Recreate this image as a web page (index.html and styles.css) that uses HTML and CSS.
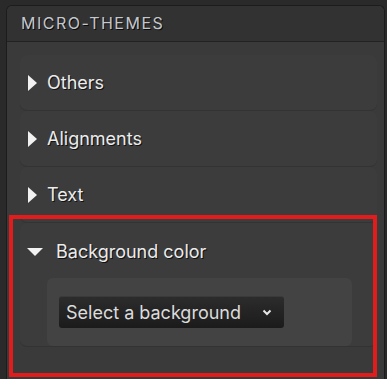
FILE: index.html
```html
<!DOCTYPE html>
<html lang="en">
<head>
  <meta charset="UTF-8">
  <title>Micro-themes</title>
  <link rel="stylesheet" href="styles.css">
</head>
<body>
<div class="painel">
  <div class="painel-titulo">MICRO-THEMES</div>
  <div class="painel-corpo">
    <div class="item">
      <div class="item-rotulo"><span class="seta"></span>Others</div>
    </div>
    <div class="item">
      <div class="item-rotulo"><span class="seta"></span>Alignments</div>
    </div>
    <div class="item">
      <div class="item-rotulo"><span class="seta"></span>Text</div>
    </div>
    <div class="item aberto">
      <div class="item-rotulo"><span class="seta"></span>Background color</div>
      <div class="item-conteudo">
        <div class="seletor">
          <span>Select a background</span>
          <svg width="10" height="7" viewBox="0 0 10 7"><path d="M1.5 1.5 L5 5 L8.5 1.5" fill="none" stroke="#e6e6e6" stroke-width="2"/></svg>
        </div>
      </div>
    </div>
  </div>
  <div class="destaque"></div>
</div>
</body>
</html>
```
FILE: styles.css
```css
body {
  margin: 0;
  background: #2a2a2a;
  font-family: Inter, "Noto Sans", sans-serif;
  color: #ececec;
  height: 379px;
  overflow: hidden;
}
.painel {
  position: relative;
  margin: 5px 2px 0 6px;
  border: 1px solid #1c1c1c;
  border-bottom: none;
  border-radius: 6px 6px 0 0;
  background: #3a3a3a;
  height: 380px;
}
.painel-titulo {
  height: 35px;
  line-height: 35px;
  padding-left: 14px;
  background: #323232;
  border-bottom: 1px solid #222;
  border-radius: 6px 6px 0 0;
  font-size: 16px;
  letter-spacing: 1.5px;
  color: #c4c8cc;
  text-shadow: 1px 1px 0 #0a0a0a;
}
.painel-corpo {
  padding: 13px 7px 0 13px;
}
.item {
  border-radius: 7px;
  border-bottom: 1px solid #333;
  background: #3c3c3c;
}
.item-rotulo {
  height: 55px;
  display: flex;
  align-items: center;
  padding-left: 8px;
  font-size: 18px;
  text-shadow: 1px 1px 0 #111;
}
.seta {
  width: 0;
  height: 0;
  border-top: 8px solid transparent;
  border-bottom: 8px solid transparent;
  border-left: 9px solid #f2f2f2;
  margin-right: 10px;
}
.aberto .item-rotulo {
  padding-left: 7px;
  height: 57px;
}
.aberto .seta {
  border-left: 8px solid transparent;
  border-right: 8px solid transparent;
  border-top: 8px solid #f2f2f2;
  border-bottom: none;
  margin-right: 13px;
}
.item-conteudo {
  margin: -2px 25px 0 27px;
  padding: 18px 12px;
  background: #434343;
  border-radius: 6px;
  height: 32px;
}
.seletor {
  width: 225px;
  height: 32px;
  box-sizing: border-box;
  display: flex;
  align-items: center;
  justify-content: space-between;
  padding: 0 12px 0 7px;
  border-radius: 3px;
  background: linear-gradient(#2c2c2c, #1b1b1b);
  border-top: 1px solid #3a3a3a;
  font-size: 18px;
  color: #dcdcdc;
}
.destaque {
  position: absolute;
  left: 2px;
  top: 209px;
  width: 360px;
  height: 154px;
  border: 4px solid #e21c1c;
}
```
